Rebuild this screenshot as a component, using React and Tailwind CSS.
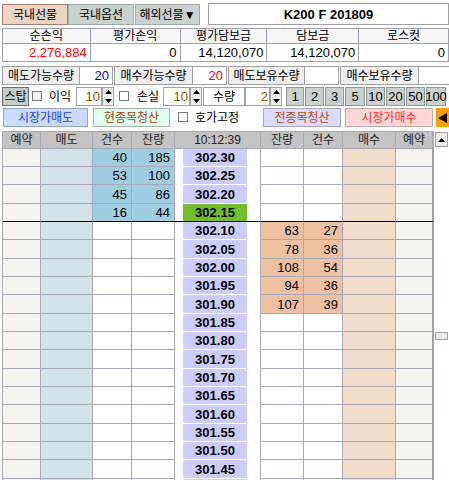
import React from "react";

const prices = [
  "302.30", "302.25", "302.20", "302.15", "302.10", "302.05", "302.00",
  "301.95", "301.90", "301.85", "301.80", "301.75", "301.70", "301.65",
  "301.60", "301.55", "301.50", "301.45", "",
];
const sell = { 0: [40, 185], 1: [53, 100], 2: [45, 86], 3: [16, 44] };
const buy = { 4: [63, 27], 5: [78, 36], 6: [108, 54], 7: [94, 36], 8: [107, 39] };

function Check() {
  return <span className="inline-block w-[10px] h-[10px] border border-[#7a7a7a] bg-white shrink-0" />;
}

function Spin() {
  return (
    <div className="w-[12px] h-full flex flex-col border border-[#a0a0a0] bg-[#f0f0f0] shrink-0">
      <div className="flex-1 flex items-center justify-center">
        <svg width="7" height="4"><path d="M0 4 L3.5 0 L7 4Z" fill="#000" /></svg>
      </div>
      <div className="flex-1 flex items-center justify-center">
        <svg width="7" height="4"><path d="M0 0 L3.5 4 L7 0Z" fill="#000" /></svg>
      </div>
    </div>
  );
}

function NumBox({ w, value }) {
  return (
    <div className={`${w} h-full border border-[#a0a0a0] bg-white flex items-center justify-end pr-[1px] text-[13px] text-[#7a5a00]`}>
      {value}
    </div>
  );
}

export default function App() {
  const top = [
    ["순손익", "2,276,884", "w-[88px]", "text-[#ff0000]"],
    ["평가손익", "0", "w-[90px]", "text-black"],
    ["평가담보금", "14,120,070", "w-[87px]", "text-black"],
    ["담보금", "14,120,070", "w-[92px]", "text-black"],
    ["로스컷", "0", "w-[90px]", "text-black"],
  ];

  const qty = [
    ["매도가능수량", "20", "w-[78px]", "w-[33px]", "text-[#0000ff]"],
    ["매수가능수량", "20", "w-[79px]", "w-[34px]", "text-[#ff0000]"],
    ["매도보유수량", "", "w-[77px]", "w-[34px]", "text-black"],
    ["매수보유수량", "", "w-[79px]", "w-[31px]", "text-black"],
  ];

  const steps = [
    ["1", "w-[18px]"], ["2", "w-[19px]"], ["3", "w-[19px]"], ["5", "w-[20px]"],
    ["10", "w-[19px]"], ["20", "w-[19px]"], ["50", "w-[19px]"], ["100", "w-[20px]"],
  ];

  return (
    <div className="w-[449px] h-[480px] overflow-hidden bg-white pl-[2px] font-['Liberation_Sans','Noto_Sans_CJK_KR',sans-serif] text-black leading-none select-none">
      {/* tabs */}
      <div className="flex h-[27px] pt-[3px] items-start">
        <div className="w-[66px] h-[21px] mt-[1px] border border-[#b07868] bg-[#ead5c5] flex items-center justify-center text-[12px]">국내선물</div>
        <div className="w-[66px] h-[21px] mt-[1px] border border-[#a0a8a4] bg-[#c9d2ce] flex items-center justify-center text-[12px]">국내옵션</div>
        <div className="w-[65px] h-[21px] mt-[1px] ml-[1px] border border-[#a0a8a4] bg-[#c9d2ce] flex items-center justify-center text-[12px]">해외선물▼</div>
        <div className="ml-[8px] flex-1 h-[22px] border border-[#a0a0a0] bg-white flex items-center justify-center font-bold text-[13px]">K200 F 201809</div>
      </div>

      {/* account summary */}
      <div className="mt-[1px] flex border-t border-l border-[#a0a0b0]">
        {top.map(([label, value, w, color]) => (
          <div key={label} className={`${w} flex flex-col`}>
            <div className="h-[15px] border-r border-b border-[#a0a0b0] bg-[#f6f6f6] flex items-center justify-center text-[12px]">{label}</div>
            <div className={`h-[18px] border-r border-b border-[#a0a0b0] bg-white flex items-center justify-end pr-[3px] text-[13px] ${color}`}>{value}</div>
          </div>
        ))}
      </div>

      {/* quantities */}
      <div className="mt-[4px] flex h-[19px] gap-[1px]">
        {qty.map(([label, value, lw, vw, color]) => (
          <div key={label} className="flex h-full">
            <div className={`${lw} h-full border border-[#a0a0a0] bg-[#efefef] flex items-center justify-center text-[12px]`}>{label}</div>
            <div className={`${vw} h-full border-y border-r border-[#a0a0a0] bg-white flex items-center justify-end pr-[3px] text-[13px] ${color}`}>{value}</div>
          </div>
        ))}
      </div>

      {/* stop / qty row */}
      <div className="mt-[2px] flex items-center h-[19px] text-[12px]">
        <div className="w-[27px] h-full border border-[#707070] bg-[#c2ccc8] flex items-center justify-center">스탑</div>
        <div className="ml-[3px]"><Check /></div>
        <div className="ml-[7px] w-[27px]">이익</div>
        <NumBox w="w-[26px]" value="10" />
        <Spin />
        <div className="ml-[5px]"><Check /></div>
        <div className="ml-[8px] w-[26px]">손실</div>
        <NumBox w="w-[27px]" value="10" />
        <Spin />
        <div className="ml-[1px] w-[42px] h-full border border-[#a0a0a0] bg-white flex items-center justify-center">수량</div>
        <NumBox w="w-[25px]" value="2" />
        <Spin />
        <div className="ml-[4px] flex h-full gap-[1px]">
          {steps.map(([s, w]) => (
            <div key={s} className={`${w} h-full border border-[#909898] bg-[#c9d2ce] flex items-center justify-center text-[13px]`}>{s}</div>
          ))}
        </div>
      </div>

      {/* order buttons */}
      <div className="mt-[2px] flex items-center h-[19px] text-[12px]">
        <div className="ml-[1px] w-[85px] h-full border border-[#9aa4b8] bg-[#c9dbff] text-[#1f3cff] flex items-center justify-center">시장가매도</div>
        <div className="ml-[5px] w-[77px] h-full border border-[#a8b4ac] bg-[#ddfff0] text-[#a8440c] flex items-center justify-center">현종목청산</div>
        <div className="ml-[8px]"><Check /></div>
        <div className="ml-[7px] w-[68px]">호가고정</div>
        <div className="w-[78px] h-full border border-[#a8a8c0] bg-[#dcdcff] text-[#c8440c] flex items-center justify-center">전종목청산</div>
        <div className="ml-[4px] w-[88px] h-full border border-[#c0a8a8] bg-[#ffd6d6] text-[#ff2a2a] flex items-center justify-center">시장가매수</div>
        <div className="ml-[3px] flex-1 h-full bg-[#ffa000] flex items-center justify-start pl-[2px]">
          <svg width="9" height="10"><path d="M0 5 L9 0 L9 10Z" fill="#000" /></svg>
        </div>
      </div>

      {/* hoga table */}
      <div className="mt-[4px] flex">
        <div className="flex flex-col border-l border-[#a8a8b8]">
          <div className="flex h-[18px] border-t border-b border-[#a8a8b8] bg-[#c3c3c3] text-[12px] text-[#222]">
            <div className="w-[38px] border-r border-[#a8a8b8] flex items-center justify-center">예약</div>
            <div className="w-[52px] border-r border-[#a8a8b8] flex items-center justify-center">매도</div>
            <div className="w-[39px] border-r border-[#a8a8b8] flex items-center justify-center">건수</div>
            <div className="w-[43px] border-r border-[#a8a8b8] flex items-center justify-center">잔량</div>
            <div className="w-[86px] border-r border-[#a8a8b8] flex items-center justify-center">10:12:39</div>
            <div className="w-[43px] border-r border-[#a8a8b8] flex items-center justify-center">잔량</div>
            <div className="w-[39px] border-r border-[#a8a8b8] flex items-center justify-center">건수</div>
            <div className="w-[53px] border-r border-[#a8a8b8] flex items-center justify-center">매수</div>
            <div className="w-[38px] border-r-2 border-[#a8a8b8] flex items-center justify-center">예약</div>
          </div>
          {prices.map((p, i) => {
            const h = i % 3 === 2 ? "h-[19px]" : "h-[18px]";
            const bb = i === 3 ? "border-b-black" : "border-b-[#a8a8b8]";
            const mid = i === 3 ? "border-b-black" : "border-b-white";
            const s = sell[i];
            const b = buy[i];
            const cell = `border-r border-b border-r-[#a8a8b8] ${bb} flex items-center justify-end pr-[4px] text-[13px]`;
            return (
              <div key={i} className={`flex ${h}`}>
                <div className={`w-[38px] bg-[#f6f3ef] ${cell}`} />
                <div className={`w-[52px] bg-[#d1e2e9] ${cell}`} />
                <div className={`w-[39px] ${s ? "bg-[#9fcde2]" : "bg-white"} ${cell}`}>{s ? s[0] : ""}</div>
                <div className={`w-[43px] ${s ? "bg-[#9fcde2]" : "bg-white"} ${cell}`}>{s ? s[1] : ""}</div>
                <div className={`w-[86px] bg-white border-r border-b border-r-[#a8a8b8] ${mid} flex`}>
                  <div className={`ml-[8px] w-[64px] h-full ${i === 3 ? "bg-[#72bd2e]" : "bg-[#ccccff]"} flex items-center justify-center font-bold text-[13px]`}>{p}</div>
                </div>
                <div className={`w-[43px] ${b ? "bg-[#f0c0a2]" : "bg-white"} ${cell}`}>{b ? b[0] : ""}</div>
                <div className={`w-[39px] ${b ? "bg-[#f0c0a2]" : "bg-white"} ${cell}`}>{b ? b[1] : ""}</div>
                <div className={`w-[53px] bg-[#f2dcca] ${cell}`} />
                <div className={`w-[38px] bg-[#f6f3ef] border-r-2 border-b border-r-[#a0a0ac] ${bb}`} />
              </div>
            );
          })}
        </div>

        {/* scrollbar */}
        <div className="w-[15px] flex flex-col items-center bg-white">
          <div className="mt-[1px] w-[13px] h-[15px] border border-[#a0a0a0] bg-[#eeeaea] flex items-center justify-center">
            <svg width="7" height="4"><path d="M0 4 L3.5 0 L7 4Z" fill="#000" /></svg>
          </div>
          <div className="mt-[185px] w-[13px] h-[8px] border border-[#a0a0a0] bg-[#eee8e8]" />
        </div>
      </div>
    </div>
  );
}
